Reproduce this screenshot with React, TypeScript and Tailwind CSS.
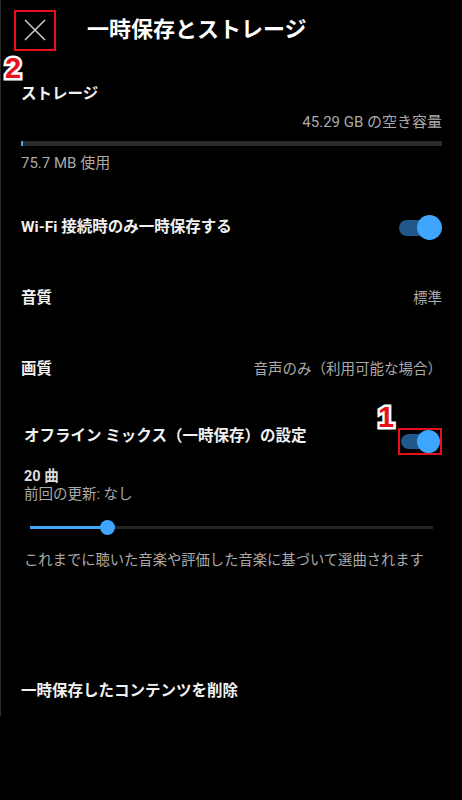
import React from "react";

const Toggle = ({ small = false }: { small?: boolean }) => {
  // track + knob, knob sits over the right end of the track
  return small ? (
    <div className="relative w-[39px] h-[23px] flex items-center">
      <div className="w-[34px] h-[15px] rounded-full bg-[#215789]" />
      <div className="absolute right-0 top-0 w-[23px] h-[23px] rounded-full bg-[#3ea6ff]" />
    </div>
  ) : (
    <div className="relative w-[43px] h-[25px] flex items-center">
      <div className="w-[36px] h-[16px] rounded-full bg-[#215789]" />
      <div className="absolute right-0 top-0 w-[25px] h-[25px] rounded-full bg-[#3ea6ff]" />
    </div>
  );
};

const Mark = ({ n, className }: { n: string; className: string }) => (
  <span
    className={`absolute text-[29px] leading-none font-black text-[#e8101a] font-['Liberation_Sans',sans-serif] [-webkit-text-stroke:5px_white] [paint-order:stroke_fill] ${className}`}
  >
    {n}
  </span>
);

export default function App() {
  return (
    <div className="min-h-[800px] bg-black font-['Roboto','Noto_Sans_CJK_JP',sans-serif]">
      <div className="border-l border-[#2c2c2c] pb-[14px]">
        {/* header */}
        <div className="h-[60px] flex items-center pl-[13px]">
          <div className="relative w-[42px] h-[41px] border-2 border-[#e8101a] flex items-center justify-center">
            <svg width="22" height="22" viewBox="0 0 22 22">
              <path d="M1 1 L21 21 M21 1 L1 21" stroke="#c8c8c8" strokeWidth="1.6" fill="none" />
            </svg>
            <Mark n="2" className="left-[-11px] top-[42px]" />
          </div>
          <h1 className="ml-[31px] text-[22px] leading-[30px] font-bold text-white">一時保存とストレージ</h1>
        </div>

        {/* storage */}
        <div className="px-[20px]">
          <p className="mt-[23px] text-[15.5px] leading-[22px] font-bold text-[#f1f1f1]">ストレージ</p>
          <p className="mt-[7px] text-right text-[15px] leading-[20px] text-[#aaaaaa]">45.29 GB の空き容量</p>
          <div className="mt-[9px] h-[5px] bg-[#2a2a2a] flex">
            <div className="w-[2px] bg-[#3ea6ff]" />
          </div>
          <p className="mt-[7px] text-[15px] leading-[20px] text-[#aaaaaa]">75.7 MB 使用</p>
        </div>

        {/* settings rows */}
        <div className="mt-[19px]">
          <div className="h-[71px] px-[20px] flex items-center justify-between">
            <span className="text-[15.5px] font-bold text-[#f1f1f1]">Wi-Fi 接続時のみ一時保存する</span>
            <Toggle />
          </div>
          <div className="h-[71px] px-[20px] flex items-center justify-between">
            <span className="text-[15.5px] font-bold text-[#f1f1f1]">音質</span>
            <span className="text-[14.5px] text-[#aaaaaa]">標準</span>
          </div>
          <div className="h-[71px] px-[20px] flex items-center justify-between">
            <span className="text-[15.5px] font-bold text-[#f1f1f1]">画質</span>
            <span className="text-[14.5px] text-[#aaaaaa]">音声のみ（利用可能な場合）</span>
          </div>
        </div>

        {/* offline mix */}
        <div className="pl-[23px] pr-[20px]">
          <div className="flex items-start justify-between">
            <span className="mt-[20px] text-[15.5px] leading-[22px] font-bold text-[#f1f1f1]">
              オフライン ミックス（一時保存）の設定
            </span>
            <div className="relative mt-[23px] w-[44px] h-[27px] border-2 border-[#e8101a] flex items-center justify-center">
              <Toggle small />
              <Mark n="1" className="left-[-22px] top-[-27px]" />
            </div>
          </div>
          <p className="mt-[13px] text-[14.5px] leading-[18px] font-bold text-[#dddddd]">20 曲</p>
          <p className="text-[14.5px] leading-[17px] text-[#aaaaaa]">前回の更新: なし</p>
          <div className="mt-[14px] h-[20px] ml-[6px] mr-[9px] relative flex items-center">
            <div className="w-full h-[3px] bg-[#262626] flex">
              <div className="w-[19.3%] bg-[#3ea6ff]" />
            </div>
            <div className="absolute left-[19.3%] top-[2.5px] -ml-[7.5px] w-[15px] h-[15px] rounded-full bg-[#3ea6ff]" />
          </div>
          <p className="mt-[13px] whitespace-nowrap text-[14.3px] leading-[20px] text-[#aaaaaa]">
            これまでに聴いた音楽や評価した音楽に基づいて選曲されます
          </p>
        </div>

        <div className="px-[20px]">
          <p className="mt-[110px] text-[15.5px] leading-[22px] font-bold text-[#f1f1f1]">一時保存したコンテンツを削除</p>
        </div>
      </div>
    </div>
  );
}
